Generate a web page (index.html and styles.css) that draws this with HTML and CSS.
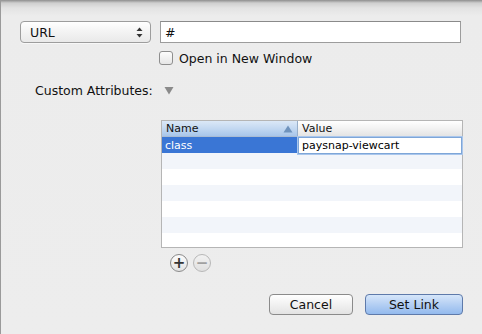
FILE: index.html
```html
<!DOCTYPE html>
<html lang="en">
  <head>
    <meta charset="UTF-8" />
    <title>Set Link</title>
    <link rel="stylesheet" href="styles.css">
  </head>
  <body>
    <div class="sheet">
      <div class="row-top">
        <div class="popup">
          <span>URL</span>
          <svg class="updown" width="7" height="11" viewBox="0 0 7 11">
            <path d="M3.5 0.5 L6.5 4 L0.5 4 Z" fill="#333" />
            <path d="M3.5 10.5 L6.5 7 L0.5 7 Z" fill="#333" />
          </svg>
        </div>
        <div class="field">#</div>
      </div>

      <label class="check-row">
        <span class="checkbox"></span>
        <span>Open in New Window</span>
      </label>

      <div class="attr-row">
        <span class="attr-label">Custom Attributes:</span>
        <svg class="disclosure" width="10" height="9" viewBox="0 0 10 9">
          <path d="M0.5 1 L9.5 1 L5 8.5 Z" fill="#8a8a8a" />
        </svg>
      </div>

      <div class="table">
        <div class="thead">
          <div class="th th-name">
            <span>Name</span>
            <svg width="10" height="8" viewBox="0 0 10 8">
              <path d="M5 0.5 L9.5 7.5 L0.5 7.5 Z" fill="#6f93bd" />
            </svg>
          </div>
          <div class="th th-value">Value</div>
        </div>
        <div class="tr selected">
          <div class="td td-name">class</div>
          <div class="td td-value"><div class="editor">paysnap-viewcart</div></div>
        </div>
        <div class="tr odd"></div>
        <div class="tr"></div>
        <div class="tr odd"></div>
        <div class="tr"></div>
        <div class="tr odd"></div>
        <div class="tr"></div>
      </div>

      <div class="pm-row">
        <span class="round-btn">+</span>
        <span class="round-btn disabled">&minus;</span>
      </div>

      <div class="actions">
        <button class="btn">Cancel</button>
        <button class="btn btn-default">Set Link</button>
      </div>
    </div>
  </body>
</html>
```

FILE: styles.css
```css
html,
body {
  margin: 0;
  padding: 0;
  width: 482px;
  height: 334px;
  overflow: hidden;
}

body {
  background: linear-gradient(to bottom, #8e8e8e 0, #cfcfcf 3px, #e3e3e3 8px, #ececec 16px, #ededed 100%);
  font-family: "DejaVu Sans", "Liberation Sans", sans-serif;
  font-size: 12.5px;
  color: #111;
  border-left: 1px solid #9a9a9a;
  box-sizing: border-box;
}

.sheet {
  padding: 21px 0 0 19px;
}

.row-top {
  display: flex;
  gap: 9px;
  height: 22px;
}

.popup {
  width: 131px;
  height: 22px;
  box-sizing: border-box;
  border: 1px solid #9d9d9d;
  border-radius: 4px;
  background: linear-gradient(to bottom, #ffffff, #f3f3f3 50%, #e9e9e9);
  display: flex;
  align-items: center;
  justify-content: space-between;
  padding: 0 7px 0 9px;
  box-shadow: 0 1px 0 rgba(255, 255, 255, 0.6);
}

.field {
  width: 301px;
  height: 22px;
  box-sizing: border-box;
  border: 1px solid #9c9c9c;
  border-top-color: #8a8a8a;
  background: #fff;
  padding: 3px 0 0 4px;
}

.check-row {
  display: flex;
  align-items: center;
  gap: 6px;
  margin: 7px 0 0 139px;
  height: 16px;
}

.checkbox {
  width: 12px;
  height: 12px;
  border: 1px solid #8e8e8e;
  border-radius: 3px;
  background: linear-gradient(to bottom, #fdfdfd, #e6e6e6);
}

.attr-row {
  display: flex;
  align-items: center;
  margin: 16px 0 0 15px;
  height: 16px;
}

.attr-label {
  width: 129px;
}

.disclosure {
  margin-top: 1px;
}

.table {
  margin: 22px 0 0 141px;
  width: 302px;
  height: 128px;
  box-sizing: border-box;
  border: 1px solid #b5b5b5;
  background: #fff;
  font-size: 11px;
}

.thead {
  display: flex;
  height: 16px;
  border-bottom: 1px solid #a9bcd4;
  box-sizing: border-box;
}

.th {
  display: flex;
  align-items: center;
  box-sizing: border-box;
  padding-left: 4px;
}

.th-name {
  width: 136px;
  justify-content: space-between;
  padding-right: 4px;
  background: linear-gradient(to bottom, #dbe8f7, #c3d8f1 50%, #a8c6ea);
  border-right: 1px solid #97aec9;
}

.th-value {
  flex: 1;
  background: linear-gradient(to bottom, #ffffff, #f2f2f2 50%, #e4e4e4);
}

.tr {
  display: flex;
  height: 16px;
}

.tr.odd {
  background: #f2f5fa;
}

.tr.selected {
  background: #3a76d5;
}

.td {
  display: flex;
  align-items: center;
  box-sizing: border-box;
}

.td-name {
  width: 136px;
  padding-left: 3px;
  color: #fff;
}

.td-value {
  flex: 1;
  position: relative;
}

.editor {
  position: absolute;
  left: 0;
  top: 0;
  right: 0;
  height: 17px;
  box-sizing: border-box;
  background: #fff;
  border: 1px solid #7ea6d8;
  box-shadow: 0 0 0 1px #a9c6ec;
  padding: 1px 0 0 3px;
  color: #000;
}

.pm-row {
  display: flex;
  gap: 5px;
  margin: 6px 0 0 150px;
}

.round-btn {
  width: 18px;
  height: 18px;
  box-sizing: border-box;
  border: 1px solid #8a8a8a;
  border-radius: 50%;
  background: linear-gradient(to bottom, #fcfcfc, #e2e2e2);
  display: flex;
  align-items: center;
  justify-content: center;
  font-size: 15px;
  font-weight: bold;
  line-height: 1;
  color: #333;
}

.round-btn.disabled {
  border-color: #b8b8b8;
  color: #a0a0a0;
  background: linear-gradient(to bottom, #f2f2f2, #e0e0e0);
}

.actions {
  display: flex;
  gap: 12px;
  margin: 22px 0 0 249px;
}

.btn {
  height: 21px;
  box-sizing: border-box;
  border: 1px solid #8b8b8b;
  border-radius: 4px;
  background: linear-gradient(to bottom, #ffffff, #f1f1f1 50%, #e3e3e3);
  font-family: "DejaVu Sans", "Liberation Sans", sans-serif;
  font-size: 12.5px;
  color: #111;
  padding: 0;
  width: 84px;
}

.btn-default {
  width: 98px;
  border-color: #5e7aaa;
  background: linear-gradient(to bottom, #d6e6fa, #b4cff3 50%, #93baee);
}
```
